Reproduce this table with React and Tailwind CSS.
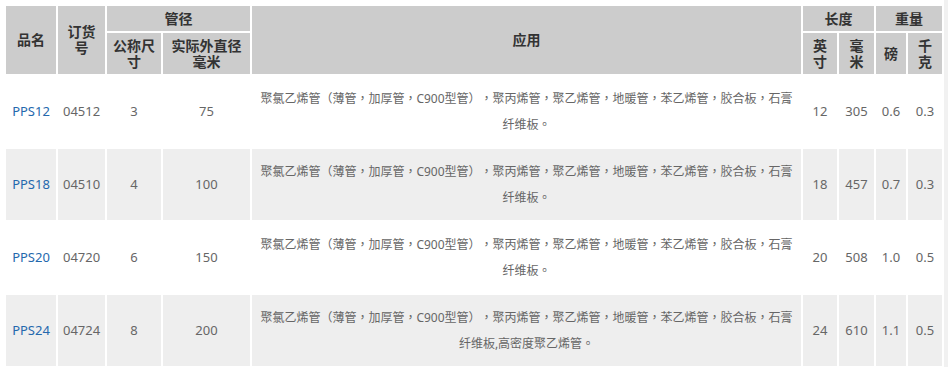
const rows = [
  { name: "PPS12", code: "04512", size: "3", dia: "75", inch: "12", mm: "305", lb: "0.6", kg: "0.3", extra: "纤维板。" },
  { name: "PPS18", code: "04510", size: "4", dia: "100", inch: "18", mm: "457", lb: "0.7", kg: "0.3", extra: "纤维板。" },
  { name: "PPS20", code: "04720", size: "6", dia: "150", inch: "20", mm: "508", lb: "1.0", kg: "0.5", extra: "纤维板。" },
  { name: "PPS24", code: "04724", size: "8", dia: "200", inch: "24", mm: "610", lb: "1.1", kg: "0.5", extra: "纤维板,高密度聚乙烯管。" },
];

const app = "聚氯乙烯管（薄管，加厚管，C900型管），聚丙烯管，聚乙烯管，地暖管，苯乙烯管，胶合板，石膏";

const th = "bg-[#cccccc] px-[5px] text-center align-middle text-[14px] font-bold leading-[16px] text-[#333]";
const td = "px-[5px] text-center align-middle text-[13px] text-[#666]";

export default function App() {
  return (
    <div className="flex h-[370px] w-[948px] bg-white font-['Noto_Sans','Noto_Sans_CJK_SC',sans-serif]">
      <div className="w-[944px] p-[4px] pr-0">
        <table className="w-[940px] table-fixed border-separate border-spacing-[2px]">
          <colgroup>
            <col className="w-[50px]" />
            <col className="w-[47px]" />
            <col className="w-[54px]" />
            <col className="w-[87px]" />
            <col className="w-[549px]" />
            <col className="w-[34px]" />
            <col className="w-[35px]" />
            <col className="w-[30px]" />
            <col className="w-[34px]" />
          </colgroup>
          <thead>
            <tr className="h-[25px]">
              <th rowSpan={2} className={th}>品名</th>
              <th rowSpan={2} className={th}>订货号</th>
              <th colSpan={2} className={th}>管径</th>
              <th rowSpan={2} className={th}>应用</th>
              <th colSpan={2} className={th}>长度</th>
              <th colSpan={2} className={th}>重量</th>
            </tr>
            <tr className="h-[41px]">
              <th className={th}>公称尺寸</th>
              <th className={th}>实际外直径<br />毫米</th>
              <th className={th}>英寸</th>
              <th className={th}>毫米</th>
              <th className={th}>磅</th>
              <th className={th}>千克</th>
            </tr>
          </thead>
          <tbody>
            {rows.map((r, i) => (
              <tr key={r.name} className={"h-[71px] " + (i % 2 === 1 ? "bg-[#eeeeee]" : "bg-white")}>
                <td className={td}>
                  <a className="text-[#2468ad]">{r.name}</a>
                </td>
                <td className={td}>{r.code}</td>
                <td className={td}>{r.size}</td>
                <td className={td}>{r.dia}</td>
                <td className="px-[5px] text-center align-middle font-['Noto_Sans','Noto_Sans_CJK_TC',sans-serif] text-[12px] leading-[26px] text-[#666] [text-spacing-trim:space-all]">
                  {app}
                  {r.extra}
                </td>
                <td className={td}>{r.inch}</td>
                <td className={td}>{r.mm}</td>
                <td className={td}>{r.lb}</td>
                <td className={td}>{r.kg}</td>
              </tr>
            ))}
          </tbody>
        </table>
      </div>
      <div className="h-[367px] w-[4px] bg-[#f1f1f1]" />
    </div>
  );
}
